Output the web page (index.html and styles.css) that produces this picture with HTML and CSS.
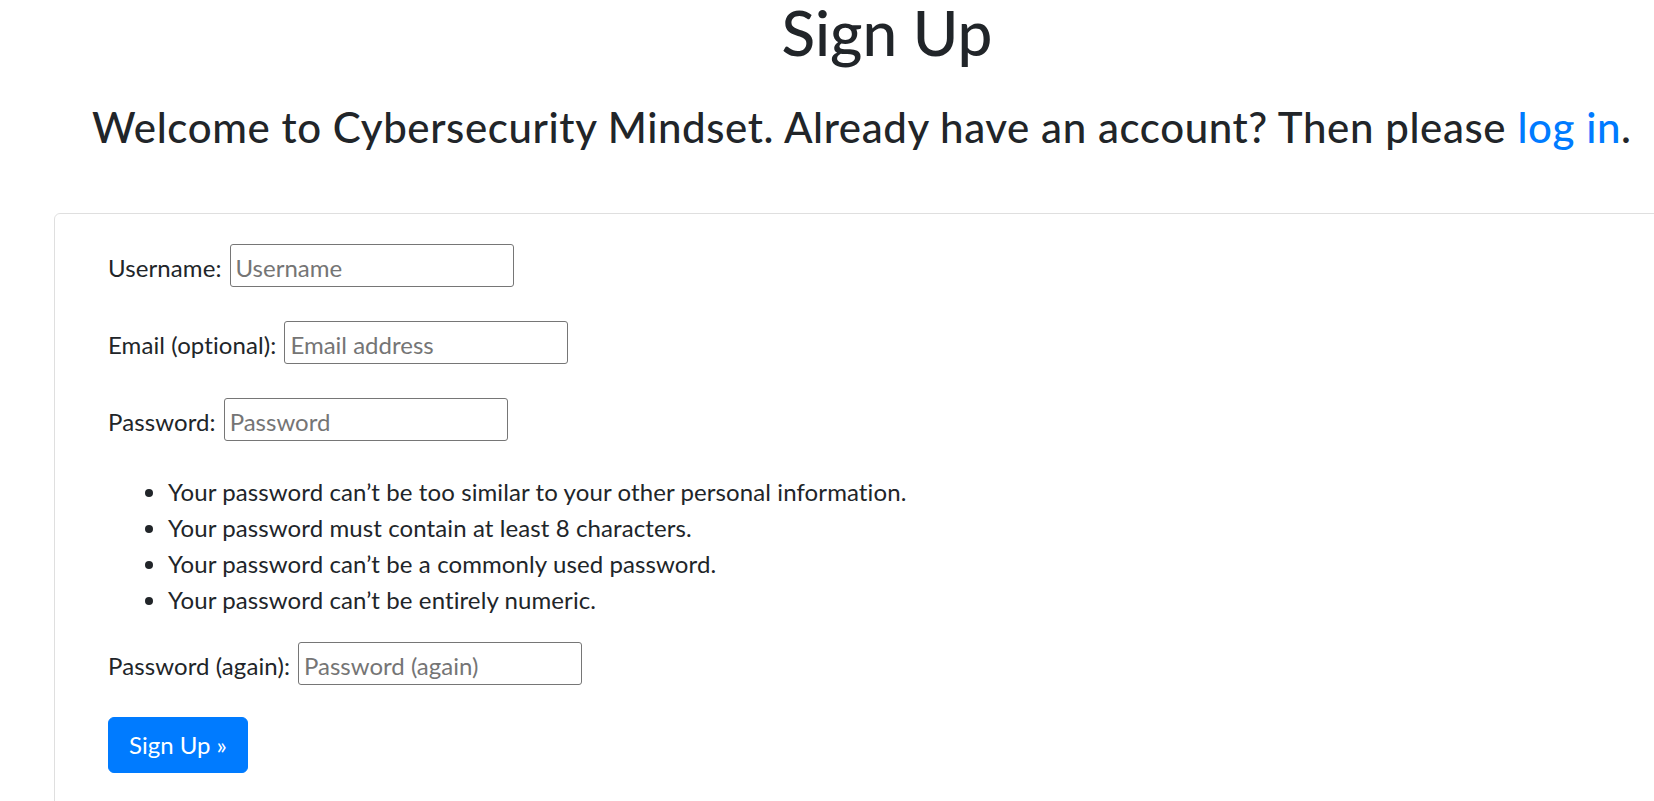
FILE: index.html
```html
<!DOCTYPE html>
<html lang="en">
<head>
<meta charset="utf-8">
<title>Sign Up</title>
<link rel="stylesheet" href="styles.css">
</head>
<body>
<div class="page">
  <h1 class="title">Sign Up</h1>
  <h3 class="welcome">Welcome to Cybersecurity Mindset. Already have an account? Then please <a href="#" class="link">log in</a>.</h3>
  <div class="card">
    <form class="card-body">
      <div class="field"><label class="label" for="u">Username:</label><input class="input" id="u" type="text" placeholder="Username"></div>
      <div class="field"><label class="label" for="e">Email (optional):</label><input class="input" id="e" type="email" placeholder="Email address"></div>
      <div class="field"><label class="label" for="p1">Password:</label><input class="input" id="p1" type="password" placeholder="Password"></div>
      <ul class="help">
        <li>Your password can’t be too similar to your other personal information.</li>
        <li>Your password must contain at least 8 characters.</li>
        <li>Your password can’t be a commonly used password.</li>
        <li>Your password can’t be entirely numeric.</li>
      </ul>
      <div class="field"><label class="label" for="p2">Password (again):</label><input class="input" id="p2" type="password" placeholder="Password (again)"></div>
      <button class="btn" type="submit">Sign Up »</button>
    </form>
  </div>
</div>
</body>
</html>
```

FILE: styles.css
```css
html, body {
  margin: 0;
  padding: 0;
  overflow: hidden;
  background: #fff;
}
body {
  font-family: Lato, "Noto Sans", sans-serif;
  font-size: 24px;
  line-height: 1.5;
  color: #212529;
}
.page {
  width: 1654px;
}
.title {
  margin: 0;
  padding-left: 120px;
  text-align: center;
  font-size: 62px;
  line-height: 64px;
  font-weight: 500;
}
.welcome {
  margin: 39px 0 0;
  padding-left: 92px;
  font-size: 42px;
  line-height: 48px;
  letter-spacing: 0.6px;
  font-weight: 500;
  white-space: nowrap;
}
.link {
  color: #007bff;
  text-decoration: none;
}
.card {
  margin: 62px -40px 0 54px;
  border: 1px solid rgba(0, 0, 0, 0.125);
  border-radius: 6px;
  height: 700px;
}
.card-body {
  padding: 30px 0 0 53px;
}
.field {
  display: flex;
  align-items: center;
  height: 43px;
  margin-bottom: 34px;
}
.label {
  padding-top: 4px;
  margin-right: 8px;
  letter-spacing: 0.1px;
}
.input {
  box-sizing: border-box;
  width: 284px;
  height: 43px;
  padding: 3px 5px 0;
  border: 1px solid #767676;
  border-radius: 3px;
  font: inherit;
  color: #212529;
}
.input::placeholder {
  color: #757575;
}
.help {
  margin: -1px 0 24px;
  padding-left: 60px;
  letter-spacing: 0.1px;
}
.help + .field {
  margin-bottom: 32px;
}
.btn {
  box-sizing: border-box;
  width: 140px;
  height: 56px;
  padding: 0 18px;
  border: 1px solid #007bff;
  border-radius: 6px;
  background: #007bff;
  color: #fff;
  font: inherit;
  line-height: 36px;
}
```
